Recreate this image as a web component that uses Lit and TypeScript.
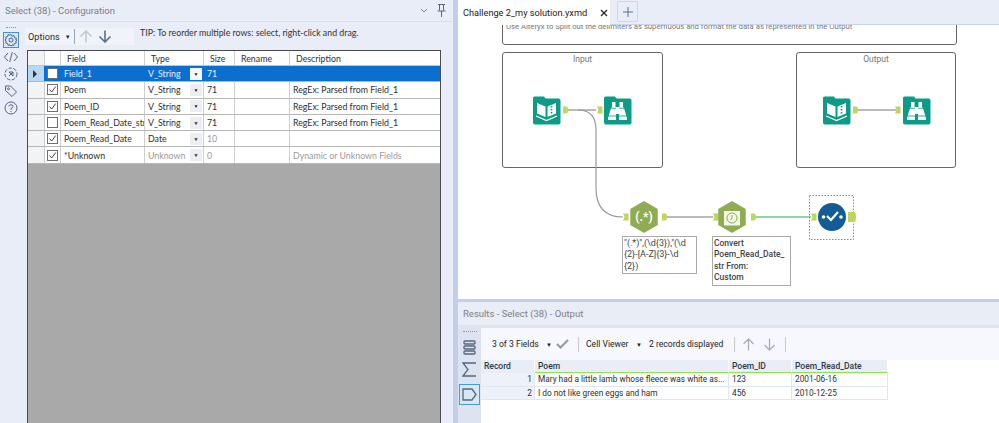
import { LitElement, html, css, svg } from 'lit';
import { customElement } from 'lit/decorators.js';

const FONT = `Roboto, "Open Sans", sans-serif`;

const fields = [
  { name: 'Field_1', type: 'V_String', size: '71', desc: '', checked: false, selected: true },
  { name: 'Poem', type: 'V_String', size: '71', desc: 'RegEx: Parsed from Field_1', checked: true },
  { name: 'Poem_ID', type: 'V_String', size: '71', desc: 'RegEx: Parsed from Field_1', checked: true },
  { name: 'Poem_Read_Date_str', type: 'V_String', size: '71', desc: 'RegEx: Parsed from Field_1', checked: false },
  { name: 'Poem_Read_Date', type: 'Date', size: '10', desc: '', checked: true, fadedSize: true },
  { name: '*Unknown', type: 'Unknown', size: '0', desc: 'Dynamic or Unknown Fields', checked: true, unknown: true },
];

const records = [
  ['1', 'Mary had a little lamb whose fleece was white as...', '123', '2001-06-16'],
  ['2', 'I do not like green eggs and ham', '456', '2010-12-25'],
];

const containers = [
  { title: 'Input', x: 44, y: 27, w: 161, h: 116 },
  { title: 'Output', x: 338, y: 27, w: 160, h: 116 },
];

const notes = [
  { x: 164, y: 211, w: 75, h: 38, text: '"(.*)",(\\d{3}),"(\\d\n{2}-[A-Z]{3}-\\d\n{2})', cls: 'note' },
  { x: 254, y: 211, w: 79, h: 50, text: 'Convert\nPoem_Read_Date_\nstr From:\nCustom', cls: 'note bold' },
];

const folder = svg`<path d="M0 1q0-1.500 1.500-1.500h9.500l1.500 2h13q2 0 2 2v22q0 2-2 2H2q-2 0-2-2z" fill="#0b9b86"/>`;

const bookIcon = (x: number, y: number) => svg`
  <g transform="translate(${x} ${y})">
    ${folder}
    <path d="M4 6l8.500 3.500v10.500L4 16.500zM14.500 9.500L23 6v10.500L14.500 20z" fill="#fff"/>
    <path d="M3 19l10.500 4.500L24 19" fill="none" stroke="#fff" stroke-width="1.200"/>
    <path d="M18.500 9v1.400M18.500 12v1.400M18.500 15v1.400" stroke="#0b9b86" stroke-width="1.600"/>
  </g>`;

const browseIcon = (x: number, y: number) => svg`
  <g transform="translate(${x} ${y})">
    ${folder}
    <path d="M8 5h3.500v5h4V5H19v5l1 1 3 10v2h-8v-6h-3v6H4v-2l3-10 1-1z" fill="#fff"/>
    <path d="M5 11.200h7M15 11.200h7M4 19h8M15 19h8" stroke="#0b9b86" stroke-width="0.800"/>
  </g>`;

const hex = (cx: number, cy: number) => svg`
  <path d="M${cx} ${cy - 15}l13 7.500v15l-13 7.500-13-7.500v-15z" fill="#8fac52" stroke="#8fac52" stroke-width="1.500" stroke-linejoin="round"/>`;

const anchorIn = (x: number, y: number) => svg`<path d="M${x} ${y - 3.5}h5.500v7H${x}l1.500-3.500z" fill="#bcd65e"/>`;
const anchorOut = (x: number, y: number, w = 5, h = 7) =>
  svg`<path d="M${x} ${y - h / 2}h${w - 2}q2 0 2 ${h / 2}t-2 ${h / 2}h-${w - 2}z" fill="#bcd65e"/>`;

@customElement('app-root')
export class AppRoot extends LitElement {
  static override styles = css`
    :host {
      display: flex;
      width: 999px;
      height: 423px;
      overflow: hidden;
      background: #e9edf8;
      font-family: Roboto, "Open Sans", sans-serif;
      font-size: 9.5px;
      color: #2e2e2e;
    }

    /* configuration panel */
    .config {
      width: 453px;
      flex: none;
      display: flex;
      flex-direction: column;
    }

    .panel-head {
      height: 22px;
      flex: none;
      display: flex;
      align-items: center;
      padding-left: 5px;
      color: #7b8088;
      font-size: 9.5px;
      box-sizing: border-box;
      border-bottom: 1px solid #d9dfee;
    }

    .panel-head .grow {
      flex: 1;
    }

    .panel-head svg {
      display: block;
    }

    .head-icons {
      display: flex;
      align-items: center;
      gap: 9px;
      padding-right: 7px;
    }

    .config-body {
      flex: 1;
      display: flex;
      min-height: 0;
    }

    .rail {
      width: 27px;
      flex: none;
      display: flex;
      flex-direction: column;
      align-items: center;
      padding: 3px 5px 0 0;
      box-sizing: border-box;
      gap: 1px;
    }

    .dots {
      height: 4px;
      width: 10px;
      border-top: 1px dotted #8c94a8;
      margin-top: 2px;
      box-sizing: border-box;
    }

    .rail-btn {
      width: 16px;
      height: 16px;
      display: flex;
      align-items: center;
      justify-content: center;
      box-sizing: border-box;
    }

    .rail-btn.on {
      border: 1px solid #4a90d0;
      background: #d4e6f7;
    }

    .config-main {
      flex: 1;
      display: flex;
      flex-direction: column;
      min-width: 0;
      padding-right: 12px;
    }

    .config-top {
      display: flex;
      height: 28px;
      flex: none;
      padding-top: 6px;
      box-sizing: border-box;
    }

    .options {
      width: 109px;
      height: 17px;
      margin-left: -2px;
      background: #f1f3fa;
      display: flex;
      align-items: center;
      padding-left: 3px;
      box-sizing: border-box;
      font-size: 9.2px;
    }

    .caret {
      margin: 0 4px;
      font-size: 6px;
    }

    .options .caret {
      margin: 0 3px 0 5px;
    }

    .sep {
      width: 1px;
      height: 15px;
      background: #9aa2b5;
      margin-right: 4px;
    }

    .tip {
      margin-left: 6px;
      line-height: 9px;
      font-family: Lato, Roboto, sans-serif;
      font-size: 8.8px;
      color: #333;
    }

    .grid {
      flex: 1;
      background: #a9a9a9;
      border: 1px solid #4a4a4a;
      border-bottom: 0;
      display: flex;
      flex-direction: column;
      box-sizing: border-box;
      font-family: Lato, Roboto, sans-serif;
      font-size: 8.8px;
    }

    .row {
      display: grid;
      grid-template-columns: 17px 16px 84px 59px 31px 55px 1fr;
      height: 16.3px;
      background: #fff;
      border-bottom: 1px solid #b6b6b6;
      box-sizing: border-box;
    }

    .row.head {
      height: 15px;
      border-bottom: 1px solid #c4c4c4;
    }

    .cell {
      border-right: 1px solid #cfcfcf;
      padding-left: 3px;
      line-height: 15px;
      white-space: nowrap;
      overflow: hidden;
      display: flex;
      align-items: center;
      justify-content: space-between;
      min-width: 0;
    }

    .row.head .cell {
      padding-left: 6px;
    }

    .cell:last-child {
      border-right: 0;
    }

    .cell.gutter {
      background: #f2f3f5;
      padding-left: 4px;
    }

    .row.sel .cell {
      background: #0a6fce;
      color: #e8f2fb;
      border-right-color: #0a6fce;
    }

    .row.sel .cell.gutter {
      background: #b9d9f2;
      color: #222;
    }

    .cell.boxcell {
      padding: 0;
      justify-content: center;
    }

    .box {
      width: 9px;
      height: 9px;
      border: 1px solid #6e6e6e;
      background: #fff;
      display: flex;
    }

    .drop {
      width: 12px;
      height: 12px;
      background: #eceef1;
      color: #222;
      font-size: 5px;
      line-height: 12px;
      text-align: center;
      margin-right: 1px;
      flex: none;
    }

    .row.sel .drop {
      background: #f4f6f9;
      color: #222;
    }

    .faded {
      color: #9a9a9a;
    }

    /* workflow side */
    .split {
      width: 5px;
      flex: none;
      background: #c3cee8;
    }

    .work {
      flex: 1;
      display: flex;
      flex-direction: column;
      min-width: 0;
      background: #fff;
    }

    .tabs {
      height: 25px;
      flex: none;
      display: flex;
      background: #e9edf8;
      border-bottom: 1px solid #c9d3ea;
      box-sizing: border-box;
    }

    .tab {
      width: 152px;
      background: #fff;
      display: flex;
      align-items: center;
      justify-content: space-between;
      padding: 0 2px 0 5px;
      box-sizing: border-box;
      font-size: 9.2px;
      color: #222;
      height: 25px;
      white-space: nowrap;
    }

    .plus {
      width: 21px;
      height: 21px;
      margin: 1px 0 0 7px;
      border: 1px solid #cdd6ec;
      border-radius: 2px;
      box-sizing: border-box;
      display: flex;
      align-items: center;
      justify-content: center;
    }

    .canvas {
      height: 274px;
      flex: none;
      position: relative;
      overflow: hidden;
    }

    .canvas > svg {
      position: absolute;
      left: 0;
      top: 0;
    }

    .container {
      position: absolute;
      border: 1.5px solid #666;
      border-radius: 3px;
      box-sizing: border-box;
      text-align: center;
      font-size: 8.5px;
      line-height: 11px;
      padding-top: 1px;
      color: #777;
    }

    .brief {
      position: absolute;
      left: 44px;
      top: -20px;
      width: 455px;
      height: 40px;
      border: 1.5px solid #666;
      border-radius: 3px;
      box-sizing: border-box;
      font-size: 7.7px;
      color: #777;
      padding: 16px 0 0 3px;
      line-height: 9px;
      white-space: nowrap;
      overflow: hidden;
    }

    .note {
      position: absolute;
      border: 1.5px solid #aaa;
      box-sizing: border-box;
      background: #fff;
      font-size: 9px;
      line-height: 11.300px;
      color: #444;
      padding: 1px 0 0 1px;
      white-space: pre;
      overflow: hidden;
    }

    .note.bold {
      font-size: 8.5px;
      font-weight: 500;
    }

    /* results */
    .results {
      flex: 1;
      display: flex;
      flex-direction: column;
      min-height: 0;
      background: #fff;
      border-top: 3px solid #c3cee8;
    }

    .res-head {
      height: 26px;
      flex: none;
      background: #e9edf6;
      border-bottom: 3px solid #dfe4f1;
      box-sizing: border-box;
      display: flex;
      align-items: center;
      padding-left: 5px;
      font-size: 9.5px;
      color: #7b8088;
    }

    .res-body {
      flex: 1;
      display: flex;
      min-height: 0;
    }

    .res-rail {
      width: 23px;
      flex: none;
      background: #dde3f1;
      display: flex;
      flex-direction: column;
      align-items: center;
      padding-top: 3px;
      box-sizing: border-box;
    }

    .res-rail .dots {
      margin: 0 0 2px;
      width: 14px;
    }

    .res-btn {
      width: 21px;
      height: 21px;
      display: flex;
      align-items: center;
      justify-content: center;
      box-sizing: border-box;
      margin-bottom: 1px;
    }

    .res-btn.on {
      border: 1px solid #4a9ad8;
      background: #d6e8f8;
      margin-top: 3px;
    }

    .res-main {
      flex: 1;
      min-width: 0;
      display: flex;
      flex-direction: column;
    }

    .res-tools {
      height: 32px;
      flex: none;
      background: #f6f8fd;
      display: flex;
      align-items: center;
      padding-left: 11px;
      font-size: 8.6px;
      color: #222;
    }

    .res-tools span {
      flex: none;
      white-space: nowrap;
    }

    .res-tools svg {
      flex: none;
    }

    .res-tools .caret {
      margin: 0;
      width: 14px;
      text-align: center;
    }

    .label-fields {
      width: 50px;
    }

    .label-cell {
      width: 46px;
    }

    .label-count {
      width: 76px;
      margin-left: 3px;
    }

    .res-tools .tsep {
      width: 1px;
      height: 15px;
      background: #c4c8d2;
      margin: 0 7px 0 9px;
    }

    .arrow-down {
      margin-left: 8px;
    }

    .res-table {
      display: grid;
      grid-template-columns: 54px 194px 63px 96px;
      width: 407px;
      font-size: 8.3px;
    }

    .th {
      height: 13px;
      line-height: 12px;
      background: #e9edf7;
      border-bottom: 1px solid #8ee24f;
      border-right: 1px solid #fff;
      padding-left: 3px;
      font-size: 8.5px;
      font-weight: 500;
      box-sizing: border-box;
      color: #2b3a4a;
      white-space: nowrap;
    }

    .th.plain {
      border-bottom-color: #e9edf7;
    }

    .td {
      height: 13.5px;
      line-height: 13px;
      border-bottom: 1px solid #dfe5f3;
      border-right: 1px solid #dfe5f3;
      padding-left: 3px;
      box-sizing: border-box;
      white-space: nowrap;
      overflow: hidden;
    }

    .td.num {
      background: #eef1f9;
      text-align: right;
      padding-right: 2px;
    }
  `;

  private _railIcons() {
    const c = '#55677f';
    return [
      html`<svg width="14" height="14" viewBox="0 0 14 14" fill="none" stroke="${c}" stroke-width="1"><circle cx="7" cy="7" r="2"/><path d="M7 1.500l1 1.600 1.900-.5.5 1.900 1.900.5-.5 1.900L13 7l-1.200 1.100.5 1.900-1.900.5-.5 1.900-1.900-.5L7 13l-1-1.100-1.900.5-.5-1.900-1.900-.5.5-1.900L1 7l1.200-1.100-.5-1.900 1.900-.5.5-1.900 1.900.5z"/></svg>`,
      html`<svg width="14" height="14" viewBox="0 0 14 14" fill="none" stroke="${c}" stroke-width="1"><path d="M4 3L.5 7 4 11M10 3l3.500 4-3.500 4M8.300 2L5.700 12"/></svg>`,
      html`<svg width="14" height="14" viewBox="0 0 14 14" fill="none" stroke="${c}" stroke-width="1"><circle cx="7" cy="7" r="6" stroke-dasharray="3.500 1.500"/><path d="M5 5h4v4zM9 5L5 9"/></svg>`,
      html`<svg width="14" height="14" viewBox="0 0 14 14" fill="none" stroke="${c}" stroke-width="1"><path d="M1.500 2h5l6 6-4.500 4.500-6.500-6z"/><circle cx="4.500" cy="4.800" r="1"/></svg>`,
      html`<svg width="14" height="14" viewBox="0 0 14 14" fill="none" stroke="${c}" stroke-width="1"><circle cx="7" cy="7" r="6"/><path d="M5 5.500Q5 3.800 7 3.800t2 1.700Q9 6.500 7 7.500V9M7 10v1"/></svg>`,
    ];
  }

  private _config() {
    return html`
      <section class="config">
        <div class="panel-head">
          <span>Select (38) - Configuration</span>
          <span class="grow"></span>
          <div class="head-icons">
            <svg width="8" height="6" viewBox="0 0 8 6" fill="none" stroke="#7a8296"><path d="M1 1l3 3 3-3"/></svg>
            <svg width="9" height="13" viewBox="0 0 9 13" fill="none" stroke="#55677f"><path d="M1 .5h7M2.500.5v6M6.500.5v6M.5 7h8M4.500 7v6"/></svg>
          </div>
        </div>
        <div class="config-body">
          <nav class="rail">
            <div class="dots"></div>
            ${this._railIcons().map(
              (icon, i) => html`<div class="rail-btn ${i === 0 ? 'on' : ''}">${icon}</div>`
            )}
          </nav>
          <div class="config-main">
            <div class="config-top">
              <div class="options">
                <span>Options</span><span class="caret">▼</span><span class="sep"></span>
                <svg width="14" height="13" viewBox="0 0 14 13" fill="none" stroke="#c4c8d0" stroke-width="1.600"><path d="M7 12.500V1M1.500 6.500L7 1l5.500 5.500"/></svg>
                <svg style="margin-left:5px" width="14" height="13" viewBox="0 0 14 13" fill="none" stroke="#5c7089" stroke-width="1.600"><path d="M7 .5V12M1.500 6.500L7 12l5.500-5.500"/></svg>
              </div>
              <div class="tip">TIP: To reorder multiple rows: select, right-click and drag.</div>
            </div>
            <div class="grid">
              <div class="row head">
                <div class="cell gutter"></div>
                <div class="cell"></div>
                <div class="cell">Field</div>
                <div class="cell">Type</div>
                <div class="cell">Size</div>
                <div class="cell">Rename</div>
                <div class="cell">Description</div>
              </div>
              ${fields.map(
                (f) => html`
                  <div class="row ${f.selected ? 'sel' : ''}">
                    <div class="cell gutter">${f.selected ? html`<svg width="6" height="8" viewBox="0 0 6 8"><path d="M1 0l4 4-4 4z" fill="#333"/></svg>` : ''}</div>
                    <div class="cell boxcell">
                      <span class="box">${f.checked ? html`<svg width="9" height="9" viewBox="0 0 9 9" fill="none" stroke="#444" stroke-width="1"><path d="M1.500 4.500L3.700 7l4-5.500"/></svg>` : ''}</span>
                    </div>
                    <div class="cell">${f.name}</div>
                    <div class="cell ${f.unknown ? 'faded' : ''}"><span>${f.type}</span><span class="drop">▼</span></div>
                    <div class="cell ${f.unknown || f.fadedSize ? 'faded' : ''}">${f.size}</div>
                    <div class="cell"></div>
                    <div class="cell ${f.unknown ? 'faded' : ''}">${f.desc}</div>
                  </div>
                `
              )}
            </div>
          </div>
        </div>
      </section>
    `;
  }

  private _flow() {
    return svg`
      <svg width="541" height="274" viewBox="458 25 541 274">
        <g fill="none" stroke="#777" stroke-width="1">
          <path d="M568 110h28"/>
          <path d="M578 110q18 0 18 20v58q0 29 27 29" stroke="#999" stroke-width="1.200"/>
          <path d="M667 217h46"/>
          <path d="M858 110h38"/>
        </g>
        <path d="M756 217h55" stroke="#2aa84a" stroke-width="1.200"/>
        ${bookIcon(533, 97)}
        ${anchorOut(563, 110)}
        ${anchorIn(597, 110)}
        ${browseIcon(604, 97)}
        ${bookIcon(823, 97)}
        ${anchorOut(853, 110)}
        ${anchorIn(895, 110)}
        ${browseIcon(903, 97)}
        ${anchorIn(623, 217)}
        ${hex(644, 217)}
        <text x="644" y="221" text-anchor="middle" font-family=${FONT} font-size="12" font-weight="700" fill="#fff">(.*)</text>
        ${anchorOut(662, 217)}
        ${anchorIn(713, 217)}
        ${hex(732, 217)}
        <rect x="723.500" y="208" width="17" height="18" fill="#f3f6e6" stroke="#8fac52"/>
        <rect x="724" y="208" width="16" height="3" fill="#8fac52"/>
        <circle cx="732" cy="218" r="5" fill="none" stroke="#8fac52"/>
        <path d="M732 215v3l-1.500 2" fill="none" stroke="#8fac52"/>
        ${anchorOut(751, 217)}
        ${anchorIn(811, 217)}
        <rect x="809.500" y="195.500" width="44" height="44" fill="none" stroke="#4a9ad8" stroke-dasharray="1.500 1.500"/>
        <circle cx="832" cy="217" r="14" fill="#135c96"/>
        <circle cx="823.500" cy="217" r="1.800" fill="#fff"/>
        <circle cx="841" cy="217" r="1.800" fill="#fff"/>
        <path d="M827 216l4 4 7-8" fill="none" stroke="#fff" stroke-width="2.200"/>
        ${anchorOut(848, 217, 8, 10)}
      </svg>
    `;
  }

  private _work() {
    return html`
      <section class="work">
        <div class="tabs">
          <div class="tab">
            <span>Challenge 2_my solution.yxmd</span>
            <svg width="8" height="8" viewBox="0 0 8 8" stroke="#222" stroke-width="1.200"><path d="M1 1l6 6M7 1L1 7"/></svg>
          </div>
          <div class="plus">
            <svg width="10" height="10" viewBox="0 0 10 10" stroke="#5f6f8f" stroke-width="1"><path d="M5 0v10M0 5h10"/></svg>
          </div>
        </div>
        <div class="canvas">
          <div class="brief">Use Alteryx to Split out the delimiters as superfluous and format the data as represented in the Output</div>
          ${containers.map(
            (c) => html`<div class="container" style="left:${c.x}px;top:${c.y}px;width:${c.w}px;height:${c.h}px">${c.title}</div>`
          )}
          ${this._flow()}
          ${notes.map(
            (n) => html`<div class="${n.cls}" style="left:${n.x}px;top:${n.y}px;width:${n.w}px;height:${n.h}px">${n.text}</div>`
          )}
        </div>
        <div class="results">
          <div class="res-head">Results - Select (38) - Output</div>
          <div class="res-body">
            <nav class="res-rail">
              <div class="dots"></div>
              <div class="res-btn">
                <svg width="13" height="15" viewBox="0 0 13 15" fill="none" stroke="#55677f" stroke-width="1.400"><rect x="1" y="1" width="11" height="3" rx="1"/><rect x="1" y="6" width="11" height="3" rx="1"/><rect x="1" y="11" width="11" height="3" rx="1"/></svg>
              </div>
              <div class="res-btn">
                <svg width="15" height="15" viewBox="0 0 15 15" fill="none" stroke="#55677f" stroke-width="1.300"><path d="M14 1H1l5 6.500-5 6.500h13"/></svg>
              </div>
              <div class="res-btn on">
                <svg width="15" height="13" viewBox="0 0 15 13" fill="none" stroke="#55677f" stroke-width="1.300"><path d="M1 1h9l4 5.500-4 5.500H1z"/></svg>
              </div>
            </nav>
            <div class="res-main">
              <div class="res-tools">
                <span class="label-fields">3 of 3 Fields</span><span class="caret">▼</span>
                <svg width="13" height="10" viewBox="0 0 13 10" fill="none" stroke="#9a9a9a" stroke-width="2.200"><path d="M1 5l3.500 3.500L12 1"/></svg>
                <span class="tsep"></span>
                <span class="label-cell">Cell Viewer</span><span class="caret">▼</span>
                <span class="label-count">2 records displayed</span>
                <span class="tsep"></span>
                <svg width="13" height="13" viewBox="0 0 13 13" fill="none" stroke="#a8adb8" stroke-width="1.300"><path d="M6.500 12.500V1M1.500 6l5-5 5 5"/></svg>
                <svg class="arrow-down" width="13" height="13" viewBox="0 0 13 13" fill="none" stroke="#a8adb8" stroke-width="1.300"><path d="M6.500.5V12M1.500 7l5 5 5-5"/></svg>
                <span class="tsep"></span>
              </div>
              <div class="res-table">
                <div class="th plain">Record</div>
                <div class="th">Poem</div>
                <div class="th">Poem_ID</div>
                <div class="th">Poem_Read_Date</div>
                ${records.map(
                  (r) => html`
                    <div class="td num">${r[0]}</div>
                    <div class="td">${r[1]}</div>
                    <div class="td">${r[2]}</div>
                    <div class="td">${r[3]}</div>
                  `
                )}
              </div>
            </div>
          </div>
        </div>
      </section>
    `;
  }

  override render() {
    return html`${this._config()}<div class="split"></div>${this._work()}`;
  }
}

declare global {
  interface HTMLElementTagNameMap {
    'app-root': AppRoot;
  }
}
